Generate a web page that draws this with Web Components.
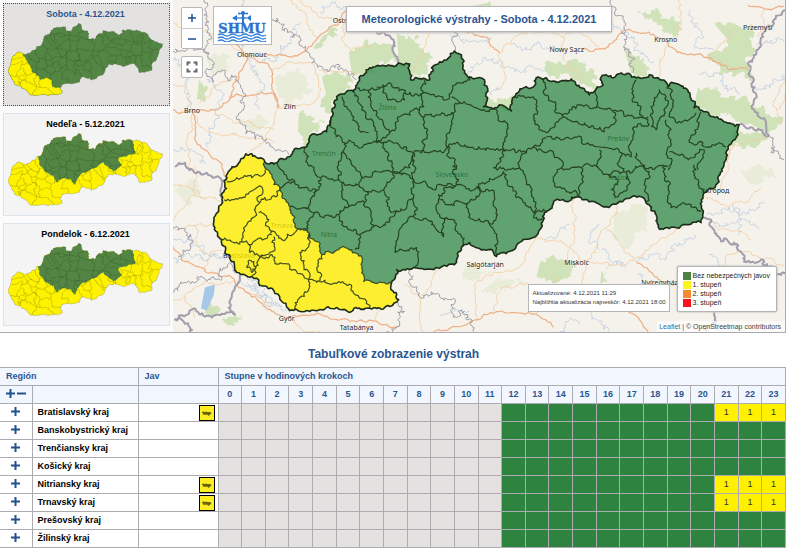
<!DOCTYPE html>
<html lang="sk">
<head>
<meta charset="utf-8">
<title>Meteorologické výstrahy</title>
<style>
body {
  margin: 0;
  background: #fff;
  font-family: "Liberation Sans", Arial, sans-serif;
  font-size: 9px;
  color: #000;
}
</style>
</head>
<body>
<warning-page>
  <day-card slot="days" day="0" selected>Sobota - 4.12.2021</day-card>
  <day-card slot="days" day="1">Nedeľa - 5.12.2021</day-card>
  <day-card slot="days" day="2">Pondelok - 6.12.2021</day-card>
  <warning-map slot="map">
    <span slot="title">Meteorologické výstrahy - Sobota - 4.12.2021</span>
    <map-legend slot="legend"></map-legend>
  </warning-map>
  <span slot="heading">Tabuľkové zobrazenie výstrah</span>
  <warning-table slot="table"></warning-table>
</warning-page>

<script>
// ---- geometry, all in map units ----
const NW = "265,162 277,163 283,159 289,157 298,149 307,147 309,140 314,134";
const NORTH = "314,134 327,132 331,120 334,103 339,95 354,92 356,86 360,80 370,68 377,66 385,66 399,63 410,64 411,80 422,79 430,80 432,68 440,62 449,58 455,51 462,58 465,73 474,79 485,80 488,98 484,107 494,109 500,105 512,111 515,97 524,88 534,87 535,81 547,78 557,82 572,79 582,88 590,95 598,87 604,85 602,77 614,78 622,73 637,78";
const EAST = "637,78 650,75 662,80 669,87 674,83 682,86 691,95 695,108 710,115 725,122 740,125 739,135 729,147 725,163 724,168 720,182 705,193 702,223 689,225 670,229 659,227 657,215 650,205 642,197 625,200 607,207 597,203 579,197 554,203 545,213 542,228 537,236 520,243 510,252 497,257 494,253 484,250 470,243 462,250 457,263 437,268 414,268 397,270 392,283";
const SOUTHWEST = "392,283 391,288 399,300 390,307 377,309 352,312 332,309 305,312 294,311 282,302 267,287 252,277 237,273 234,262 225,253 222,240 215,228 214,218 222,200 224,192 227,178 232,167 246,154 265,162";
const SPLIT = "265,162 265,168 272,175 274,185 280,188 282,197 290,207 295,218 295,227 307,230 309,238 317,242 322,255 339,250 352,250 362,257 364,282 377,284 392,283";
const SPLIT_LATER = "637,78 640,90 646,126 615,135 589,142 600,168 572,190 551,171 538,156 515,174 487,186 458,204 438,238 426,216 399,214 379,228 367,204 342,192 320,162 314,134";

const DISTRICTS = `
227,182 237,178 252,178 265,170
224,200 240,198 250,192 260,186 263,190 257,198 260,203 272,197 280,188
260,203 256,213 247,225 242,242
222,240 242,242 249,245 257,240 272,235
259,213 269,220 271,233 282,240 295,233 307,230
249,245 250,253 260,258 275,248 274,237
260,258 256,268 252,276
248,262 247,268 252,273 256,268 254,262 248,262
260,258 272,255 275,262 295,270 309,280 310,287 300,298 295,310
307,230 309,247 300,253 304,265 309,272 309,280
309,280 320,282 322,275 317,268 322,255
320,282 339,282 352,288 367,302 370,308
280,188 295,183 305,188 319,190 321,178 339,180 359,185 364,178 352,165 342,153
319,190 312,198 305,208 295,208 290,207
305,208 315,213 339,215 349,207 342,195 344,182
315,213 307,227 307,230
339,215 342,225 360,235 359,245 355,250
349,207 365,203 367,192 359,185
360,235 372,228 369,208 365,203
342,97 349,110 359,130 369,133
332,120 335,133 345,143 362,148 377,143
305,147 307,160 314,170 321,178
277,163 284,172 295,183
345,143 342,153 339,165 339,180
355,93 362,110 374,123 377,142
357,88 372,88 384,87
369,90 371,104 378,117 390,133
377,87 390,83 404,90 405,100 397,102 387,97 384,87
405,93 424,93 425,80
424,93 437,97 450,97 460,83 470,76
424,93 420,110 425,117 452,113 460,103 452,97
460,103 477,108 497,110 499,117 507,123 505,150
425,117 424,140 420,153
452,113 447,147 449,157 457,170
449,147 470,148 507,150 527,153 534,147 547,138
377,142 390,133 400,117 420,110
377,143 397,143 414,153 444,153 449,147
384,143 388,160 394,172 410,168 414,153
364,178 378,172 394,172
514,97 534,97 537,110 534,117 540,127 547,133 570,110 582,105
544,80 544,93 556,107 564,117
547,137 564,140 582,137 582,143
534,147 554,153 562,168 554,182 566,190 579,197
527,153 520,168
582,105 599,107 612,110 639,118 649,117
598,88 597,107
637,80 634,95 642,107 644,118 650,125
652,127 652,107 660,90 667,97 662,117 657,130 652,127
667,88 674,100 670,117 682,123 697,113
667,120 670,147 669,170
702,112 699,127 692,143 705,147 727,147
670,152 692,158 705,150 699,170
564,117 582,125 605,132 617,121 612,110
582,143 599,147 622,153 632,157 635,127 650,125
637,153 644,167 669,167
695,165 699,185 704,195
664,165 670,182 672,208 692,205 702,212
645,165 650,172 645,185 647,202
599,168 609,175 625,172 629,185 619,197 612,190 619,182 609,175
562,168 582,168 599,168 600,150
582,168 584,182 579,197
622,153 618,164 625,172 645,167
457,165 457,185 447,188 439,195 440,215 447,218 444,237 432,225 414,217 399,232 395,253
414,153 414,180 430,188 457,185
414,180 414,198 414,217
414,180 394,172 384,190 390,208 399,212 414,198
395,253 417,248 415,267
447,218 462,237 464,247
457,185 477,188 480,195 469,203 449,205 440,200
469,203 474,220 494,223 497,212 495,195 477,187
490,223 497,237 497,255
477,188 504,172 517,198 534,218 544,218
507,150 494,168 520,168 527,185 534,198 535,212 547,212
399,212 380,228 372,228
367,192 384,190`;

const WOODS = `
309,50 322,38 338,30 333,38 320,48
322,77 340,74 356,81 345,92 339,100 331,113 322,108 326,93
299,117 325,121 318,132 303,144 298,132
349,53 377,43 394,50 398,62 377,66 363,78 352,72
199,80 208,87 204,103 197,100
397,33 420,37 420,50 434,57 420,78 412,76 410,62 399,61
487,98 514,93 511,110 500,104 484,106
544,67 582,62 598,77 595,90 580,84 571,77 550,77
639,10 682,23 680,35 662,30 645,17
712,20 742,27 762,24 749,63 755,80 735,77 709,60 729,40
699,87 742,97 782,117 770,133 742,124 710,114 695,105
625,50 649,67 642,75 632,73
735,130 769,137 762,147 733,147
540,265 550,255 572,262 576,268 560,282 537,278
462,8 477,14 497,9 488,3
204,313 212,305 219,312 214,318
222,320 240,315 243,322 228,326
602,272 612,265 609,282 601,284`;

const PALE_WOODS = `
500,278 524,285 497,295 477,295
615,212 649,208 649,232 625,248 614,238
275,80 300,70 312,90 290,105 279,98
207,60 230,58 225,72 212,75
240,120 262,114 268,124 250,131
174,190 190,180 202,190 188,206
470,262 492,272 480,280 462,274
740,170 762,163 778,176 752,186`;

const ROADS = `
172,110 192,112 215,110 232,97 262,92 272,93 277,108
230,98 239,77 247,57 269,55 302,53 319,37 339,23 347,10
192,113 195,137 208,152 222,167 230,190
247,57 240,48 225,40
172,245 185,262 205,272 232,278 245,292 272,312 289,318 312,315 377,322 398,328
434,332 477,320 500,312 537,315 554,328
500,53 490,40 467,33
582,50 609,47 625,30 649,32 669,43 682,53 709,58 729,70 749,70
247,57 265,63 272,70 272,87 279,108
749,5 764,8 785,6
637,262 665,282 690,290
615,298 639,318 649,332`;

const MINOR_ROADS = `
194,113 192,127 187,147 189,170
279,108 272,127 259,147 246,156
272,70 289,62 312,63 319,83 315,103 279,108
215,113 239,123 252,123 275,130
232,133 255,140 275,143
319,70 340,72 357,76
300,0 312,10 325,18 345,23 360,20
319,37 310,30 304,12 290,0
345,23 342,40 352,50 372,47
239,77 215,88 200,103
172,20 190,35 205,30 225,40 247,57
172,85 188,90 193,112
193,112 205,130 222,136 236,133
505,73 500,53 520,35 550,28 582,30
505,73 500,90
564,37 567,63 580,77
550,28 564,37 582,30 600,47
430,33 417,60 414,77
679,0 682,30 669,45 660,60 660,77
764,8 765,26 760,37
709,58 729,40 735,27
785,80 775,107 782,123
785,95 779,110
172,222 195,195 195,167
195,195 212,198 222,204
172,232 198,225 214,225
172,185 190,188 206,200
185,298 205,282 238,282
172,302 185,298 195,318
205,272 209,255 222,250
195,225 197,245 205,255
245,292 260,295 275,313
289,318 300,328 320,332
405,285 420,298 424,332
477,322 477,282 494,273 520,268 537,235 567,245 582,262
574,198 572,245 567,265
494,312 502,288 530,285
619,202 607,228 592,255 582,282
607,230 625,252 637,262
582,262 625,265 637,258 662,238 685,228
704,195 725,205 749,202 762,188
715,222 720,230 740,232 752,240
725,268 729,255 749,252 785,265
725,163 735,145 770,137
734,147 730,165 722,190
377,322 381,305 392,300
420,298 432,285 438,270
537,315 540,295 560,280
582,282 600,300 615,298`;

const RIVERS = `
172,241 192,242 215,255 232,262 245,275 259,288 275,305 289,314
172,258 190,256 210,259 224,256
240,278 252,290 262,296 272,306
247,283 256,284 265,294 282,307
245,0 232,20 240,40 252,70 262,90 259,110
172,60 192,70 185,90 190,112
210,78 222,100 215,125 208,148
300,22 290,40 278,55 262,60
320,12 337,5 350,8
467,75 480,65 500,60 515,72 530,65 548,70
479,83 492,95 502,88
512,45 525,50 538,42 555,50
450,35 470,42 492,37
600,20 615,28 640,52 655,62
690,10 700,30 695,45 715,50
700,75 722,75 731,88 740,95
757,45 772,40 785,42
755,85 772,88 785,75
708,215 725,208 745,212 765,202
710,222 730,225 748,222 760,230
640,262 660,258 680,243 695,235
638,275 650,285 665,300
602,250 612,262 627,267
587,310 602,325 610,332
560,332 570,320 580,325
600,225 590,240 600,250
440,315 455,308 470,312
545,240 560,232 570,225
710,255 720,265 718,280
735,205 742,220 739,235
172,152 187,150 200,155 206,164`;

const FRONTIERS = `
272,20 282,30 292,37 305,50 312,63 339,70 357,80
172,53 187,50 209,53 209,70 214,82 222,70 235,80 244,97 240,123 252,133 272,147 289,155
204,0 204,15 208,30 209,53
612,0 625,20 622,33 632,53 634,73
456,50 458,36 452,30
770,135 772,153 785,160
172,293 179,285 199,280 219,273 232,265 237,272
172,228 185,232 187,250 178,258
409,270 409,282 420,297 450,300 457,318 465,312 474,332
399,300 405,312 400,322 387,332`;

const THICK_FRONTIERS = `
377,32 394,40 399,63
787,10 764,37 749,63 755,80 755,110 767,123 770,135
740,125 755,130 770,136
704,218 712,220 722,242 735,243 745,262 762,260 779,275 788,276
715,313 707,332
175,167 185,163 202,175 220,178 224,198
240,275 232,295 235,315 212,318 192,310 175,320 190,328 190,333`;

const PLACES = [
  [184, 113, "Brno"], [237, 57, "Olomouc"], [333, 23, "Ostrava"], [284, 109, "Zlín"],
  [312, 156, "Trenčín"], [379, 110, "Žilina"], [550, 52, "Nowy Sącz"], [655, 42, "Krosno"],
  [744, 30, "Przemyśl"], [608, 141, "Prešov"], [609, 180, "Košice"], [701, 193, "Ужгород"],
  [436, 177, "Slovensko"], [467, 267, "Salgótarján"], [565, 265, "Miskolc"],
  [642, 285, "Nyíregyháza"], [271, 228, "Trnava"], [321, 237, "Nitra"],
  [223, 258, "Bratislava"], [279, 322, "Győr"], [340, 331, "Tatabánya"]
];

// ---- drawing helpers ----
function toPoints(text) {
  return text.trim().split(/\s+/).map((pair) => pair.split(",").map(Number));
}

function noise(a, b) {
  const n = Math.sin(a[0] * 12.99 + a[1] * 78.23 + b[0] * 37.72 + b[1] * 9.15) * 43758.5453;
  return n - Math.floor(n) - 0.5;
}

// Splits a segment into small crooked steps. The result depends only on the
// two end points, so neighbours that share a border get the same line.
function crooked(a, b, amount) {
  const length = Math.hypot(b[0] - a[0], b[1] - a[1]);
  if (length < 3) return [b];
  const flip = a[0] > b[0] || (a[0] === b[0] && a[1] > b[1]);
  const [p, q] = flip ? [b, a] : [a, b];
  // long segments bend less, short ones keep the full jitter
  const shift = noise(p, q) * amount * Math.min(1, 7 / length);
  const mid = [
    (a[0] + b[0]) / 2 - (q[1] - p[1]) * shift,
    (a[1] + b[1]) / 2 + (q[0] - p[0]) * shift
  ];
  return [...crooked(a, mid, amount), ...crooked(mid, b, amount)];
}

function pathOf(text, amount = 0.6, close = false) {
  const points = toPoints(text);
  let line = [points[0]];
  for (let i = 1; i < points.length; i++) {
    line = line.concat(crooked(points[i - 1], points[i], amount));
  }
  return "M" + line.map((p) => p[0].toFixed(1) + " " + p[1].toFixed(1)).join("L") + (close ? "Z" : "");
}

function manyPaths(text, amount, close) {
  return text.trim().split("\n").map((row) => pathOf(row, amount, close)).join("");
}

function reversed(text) {
  return text.split(" ").reverse().join(" ");
}

const shapes = {
  country: pathOf([NW, NORTH, EAST, SOUTHWEST].join(" "), 0.6, true),
  west: pathOf(SOUTHWEST + " " + SPLIT, 0.6, true),
  rest: pathOf([NW, NORTH, EAST, reversed(SPLIT)].join(" "), 0.6, true),
  later: pathOf(NORTH + " " + SPLIT_LATER, 0.6, true),
  split: pathOf(SPLIT),
  districts: manyPaths(DISTRICTS, 0.8)
};

function define(name, html, setup) {
  const template = document.createElement("template");
  template.innerHTML = html;
  customElements.define(name, class extends HTMLElement {
    constructor() {
      super();
      this.attachShadow({ mode: "open" });
      this.shadowRoot.appendChild(template.content.cloneNode(true));
    }
    connectedCallback() {
      if (setup) setup(this, this.shadowRoot);
    }
  });
}

define("warning-page", `
<style>
:host { display: block; }
.top {
  display: flex;
  margin-right: 1px;
  border-bottom: 1px solid #aaabb0;
  border-right: 1px solid #aaabb0;
}
.days {
  flex: 0 0 167px;
  display: flex;
  flex-direction: column;
  gap: 7px;
  padding: 3px;
  background: #fbfbfb;
}
.map { flex: 1; min-width: 0; }
h2 {
  margin: 0;
  padding: 13px 0 5px;
  font-size: 12px;
  line-height: 16px;
  text-align: center;
  color: #2a5591;
}
.table { margin-right: 1px; }
</style>
<div class="top">
  <div class="days"><slot name="days"></slot></div>
  <div class="map"><slot name="map"></slot></div>
</div>
<h2><slot name="heading"></slot></h2>
<div class="table"><slot name="table"></slot></div>
`);

define("day-card", `
<style>
:host { display: block; }
button {
  display: flex;
  flex-direction: column;
  align-items: center;
  gap: 2px;
  width: 100%;
  padding: 4px 6px 9px 4px;
  border: 1px solid #dbe3ec;
  background: #f4f4f4;
  font: bold 9px/13px "Liberation Sans", Arial, sans-serif;
  color: #000;
  cursor: pointer;
}
:host([selected]) button {
  border: 1px dotted #1c4c96;
  background: #e3e2e1;
  color: #2a5591;
}
svg { display: block; width: 100%; height: 73px; }
</style>
<button type="button">
  <slot></slot>
  <svg viewBox="213 50 528 264" preserveAspectRatio="none" aria-hidden="true"></svg>
</button>
`, (host, root) => {
  const today = host.getAttribute("day") === "0";
  root.querySelector("button").setAttribute("aria-pressed", host.hasAttribute("selected"));
  root.querySelector("svg").innerHTML = `
    <path d="${shapes.country}" fill="${today ? "#538645" : "#fff200"}"/>
    <path d="${today ? shapes.west : shapes.later}" fill="${today ? "#fff200" : "#538645"}"/>
    <path d="${shapes.districts}${shapes.country}${shapes.split}" fill="none" stroke="#2b3a10" stroke-opacity=".45" stroke-width="1.6"/>`;
});

define("map-tools", `
<style>
:host { display: flex; flex-direction: column; gap: 7px; }
.group {
  display: flex;
  flex-direction: column;
  width: 20px;
  border: 1px solid #b8b8b8;
  border-radius: 2px;
  background: #fff;
}
button {
  display: grid;
  place-items: center;
  height: 20px;
  padding: 0;
  border: 0;
  background: none;
  color: #1f4f90;
  cursor: pointer;
}
button + button { border-top: 1px solid #ccc; }
</style>
<div class="group">
  <button type="button" aria-label="Priblížiť"><svg width="10" height="10"><path d="M5 1V9M1 5H9" stroke="currentColor" stroke-width="1.5"/></svg></button>
  <button type="button" aria-label="Oddialiť"><svg width="10" height="10"><path d="M1 5H9" stroke="currentColor" stroke-width="1.5"/></svg></button>
</div>
<div class="group">
  <button type="button" aria-label="Celá obrazovka"><svg width="12" height="12"><path d="M1.5 4.5V1.5H4.5M7.5 1.5H10.5V4.5M10.5 7.5V10.5H7.5M4.5 10.5H1.5V7.5" fill="none" stroke="#666" stroke-width="2"/></svg></button>
</div>
`);

define("shmu-logo", `
<style>
:host {
  display: block;
  padding: 2px;
  border: 1px solid #bbb;
  background: #fff;
}
svg { display: block; }
text { font: bold 13px "DejaVu Serif", serif; }
</style>
<svg width="53" height="33" viewBox="0 0 53 33" role="img" aria-label="SHMÚ">
  <g fill="none" stroke="#2b74cf">
    <path d="M27 3V15" stroke-width="2"/>
    <path d="M19 9H35" stroke-width="1.2"/>
    <path d="M23 4.5H31" stroke-width="1.2"/>
  </g>
  <g fill="#2b74cf">
    <circle cx="27" cy="4" r="2"/>
    <circle cx="23" cy="4.5" r="1"/>
    <circle cx="31" cy="4.5" r="1"/>
    <path d="M16 9L21 6V12ZM32 8L35 6V12L32 10ZM25 9L27 7L29 9L27 11Z"/>
  </g>
  <text x="26" y="24" text-anchor="middle" fill="#2b74cf" stroke="#2b74cf" stroke-width=".4">SHMU</text>
  <path d="M2 26q3 -2 6 0t6 0t6 0t6 0t6 0t6 0t6 0t6 0M2 29q3 -2 6 0t6 0t6 0t6 0t6 0t6 0t6 0t6 0M2 32q3 -2 6 0t6 0t6 0t6 0t6 0t6 0t6 0t6 0" fill="none" stroke="#2f7fdb" stroke-width="1.5"/>
</svg>
`);

define("map-legend", `
<style>
:host {
  display: block;
  padding: 4px 6px 4px 5px;
  border: 1px solid #b5b5b5;
  border-radius: 2px;
  background: #fff;
  box-shadow: 0 0 2px #999;
}
ul { margin: 0; padding: 0; list-style: none; font-size: 7px; line-height: 9px; color: #222; }
li { display: flex; align-items: center; gap: 2px; white-space: nowrap; }
i { width: 8px; height: 8px; }
.s0 { background: #4c8144; }
.s1 { background: #fff31c; }
.s2 { background: #f58a33; }
.s3 { background: #f5151c; }
</style>
<ul>
  <li><i class="s0"></i>Bez nebezpečných javov</li>
  <li><i class="s1"></i>1. stupeň</li>
  <li><i class="s2"></i>2. stupeň</li>
  <li><i class="s3"></i>3. stupeň</li>
</ul>
`);

define("warning-map", `
<style>
:host { display: block; position: relative; overflow: hidden; }
.map { display: block; width: 100%; height: auto; }
.map text { font: 7px "Noto Sans", sans-serif; fill: #222; stroke: #fff; stroke-width: 1px; stroke-opacity: .5; paint-order: stroke; }
map-tools { position: absolute; left: 8px; top: 7px; }
shmu-logo { position: absolute; left: 40px; top: 6px; }
h1 {
  position: absolute;
  left: 173px;
  right: 173px;
  top: 6px;
  box-sizing: border-box;
  margin: 0;
  padding: 5px 0;
  border: 1px solid #b5b5b5;
  background: #fff;
  box-shadow: 0 1px 2px #bbb;
  font-size: 11px;
  line-height: 14px;
  text-align: center;
  white-space: nowrap;
  color: #2a5591;
}
.corner {
  position: absolute;
  right: 8px;
  bottom: 20px;
  display: flex;
  align-items: flex-end;
  gap: 7px;
}
.updated {
  padding: 4px 3px;
  border: 1px solid #b5b5b5;
  background: #fff;
  font-size: 6px;
  line-height: 9px;
  white-space: nowrap;
  color: #333;
}
.updated p { margin: 0; }
.credit {
  position: absolute;
  right: 0;
  bottom: 0;
  padding: 0 4px 0 2px;
  background: rgba(255, 255, 255, .7);
  font-size: 7px;
  line-height: 11px;
  color: #444;
}
a { color: #1f6fb5; text-decoration: none; }
</style>
<svg class="map" viewBox="173 0 613 333" role="img" aria-label="Mapa výstrah"></svg>
<map-tools></map-tools>
<shmu-logo></shmu-logo>
<h1><slot name="title"></slot></h1>
<div class="corner">
  <div class="updated">
    <p>Aktualizované: 4.12.2021 11:29</p>
    <p>Najbližšia aktualizácia najneskôr: 4.12.2021 18:00</p>
  </div>
  <slot name="legend"></slot>
</div>
<div class="credit"><a href="#">Leaflet</a> | © OpenStreetmap contributors</div>
`, (host, root) => {
  const places = PLACES.map(([x, y, name]) => `<text x="${x}" y="${y}">${name}</text>`).join("");
  root.querySelector(".map").innerHTML = `
    <rect x="173" width="613" height="333" fill="#f5f2ec"/>
    <path d="${manyPaths(PALE_WOODS, 1.2, true)}" fill="#e8ecd9"/>
    <path d="${manyPaths(WOODS, 1.2, true)}" fill="#cfe2b8"/>
    <path d="M205 288L215 285L214 295L207 311L201 309Z" fill="#a5c8e8"/>
    <g fill="none" stroke-linejoin="round">
      <path d="${manyPaths(RIVERS, 1.2)}" stroke="#b4c9e0" stroke-width=".7"/>
      <path d="${manyPaths(MINOR_ROADS, 0.6)}" stroke="#f3cfa4" stroke-width=".9"/>
      <path d="${manyPaths(ROADS, 0.5)}" stroke="#efae84" stroke-width="1.2"/>
      <path d="${manyPaths(FRONTIERS, 1.2)}" stroke="#a09ca8" stroke-width="1"/>
      <path d="${manyPaths(THICK_FRONTIERS, 0.8)}" stroke="#a29dac" stroke-width="2"/>
    </g>
    ${places}
    <path d="${shapes.rest}" fill="#2e8848" fill-opacity=".75"/>
    <path d="${shapes.west}" fill="#ffee00" fill-opacity=".8"/>
    <g fill="none" stroke-linejoin="round">
      <path d="${shapes.districts}${shapes.split}" stroke="#1d3418" stroke-opacity=".85" stroke-width="1.2"/>
      <path d="${shapes.country}" stroke="#1c2c16" stroke-width="1.6"/>
    </g>`;
});

define("hazard-icon", `
<style>
:host { display: block; width: 14px; height: 14px; border: 1px solid #000; background: #fcee21; }
svg { display: block; }
</style>
<svg width="14" height="14" role="img" aria-label="Poľadovica">
  <path d="M2 6.5h4l5 .5M3 8h6M8 9.5l3 -2.500" fill="none" stroke="#6b6510" stroke-width="1.5"/>
</svg>
`);

define("warning-table", `
<style>
:host { display: block; }
table { width: 100%; border-collapse: collapse; table-layout: fixed; font-size: 9px; line-height: 11px; }
.toggle { width: 32px; }
.region { width: 106px; }
.event { width: 80px; }
th, td { height: 17px; padding: 0; border: 1px solid #acacb0; text-align: center; }
tr > :first-child { border-left: 0; }
thead th { background: #f2f7ff; color: #2a5591; }
thead tr:first-child th { padding-left: 6px; text-align: left; }
tbody th { padding-left: 5px; text-align: left; white-space: nowrap; }
.past { background: #e3e2e1; }
.none { background: #2e843e; }
.level1 { background: #fff000; color: #333; }
.buttons { display: flex; justify-content: center; gap: 2px; padding-bottom: 3px; }
button { display: block; padding: 0; border: 0; background: none; color: #22528f; cursor: pointer; }
button svg { display: block; }
hazard-icon { margin-left: auto; margin-right: 3px; }
</style>
<table>
  <colgroup><col class="toggle"><col class="region"><col class="event"><col span="24"></colgroup>
  <thead>
    <tr><th colspan="2">Región</th><th>Jav</th><th colspan="24">Stupne v hodinových krokoch</th></tr>
    <tr class="hours"></tr>
  </thead>
  <tbody></tbody>
</table>
`, (host, root) => {
  const regions = [
    ["Bratislavský kraj", true],
    ["Banskobystrický kraj", false],
    ["Trenčiansky kraj", false],
    ["Košický kraj", false],
    ["Nitriansky kraj", true],
    ["Trnavský kraj", true],
    ["Prešovský kraj", false],
    ["Žilinský kraj", false]
  ];
  const icon = (d, label) => `<button type="button" aria-label="${label}"><svg width="9" height="9"><path d="${d}" stroke="currentColor" stroke-width="2"/></svg></button>`;
  const plus = (label) => icon("M4.500 0V9M0 4.500H9", label);
  const minus = icon("M0 4.500H9", "Zbaliť všetko");

  let hours = `<th><div class="buttons">${plus("Rozbaliť všetko")}${minus}</div></th><th></th><th></th>`;
  for (let h = 0; h < 24; h++) hours += `<th>${h}</th>`;
  root.querySelector(".hours").innerHTML = hours;

  root.querySelector("tbody").innerHTML = regions.map(([name, warned]) => {
    let row = `<td><div class="buttons">${plus("Rozbaliť " + name)}</div></td><th>${name}</th>`;
    row += `<td>${warned ? "<hazard-icon></hazard-icon>" : ""}</td>`;
    for (let h = 0; h < 24; h++) {
      if (h < 12) row += `<td class="past"></td>`;
      else if (warned && h > 20) row += `<td class="level1">1</td>`;
      else row += `<td class="none"></td>`;
    }
    return `<tr>${row}</tr>`;
  }).join("");
});
</script>
</body>
</html>
